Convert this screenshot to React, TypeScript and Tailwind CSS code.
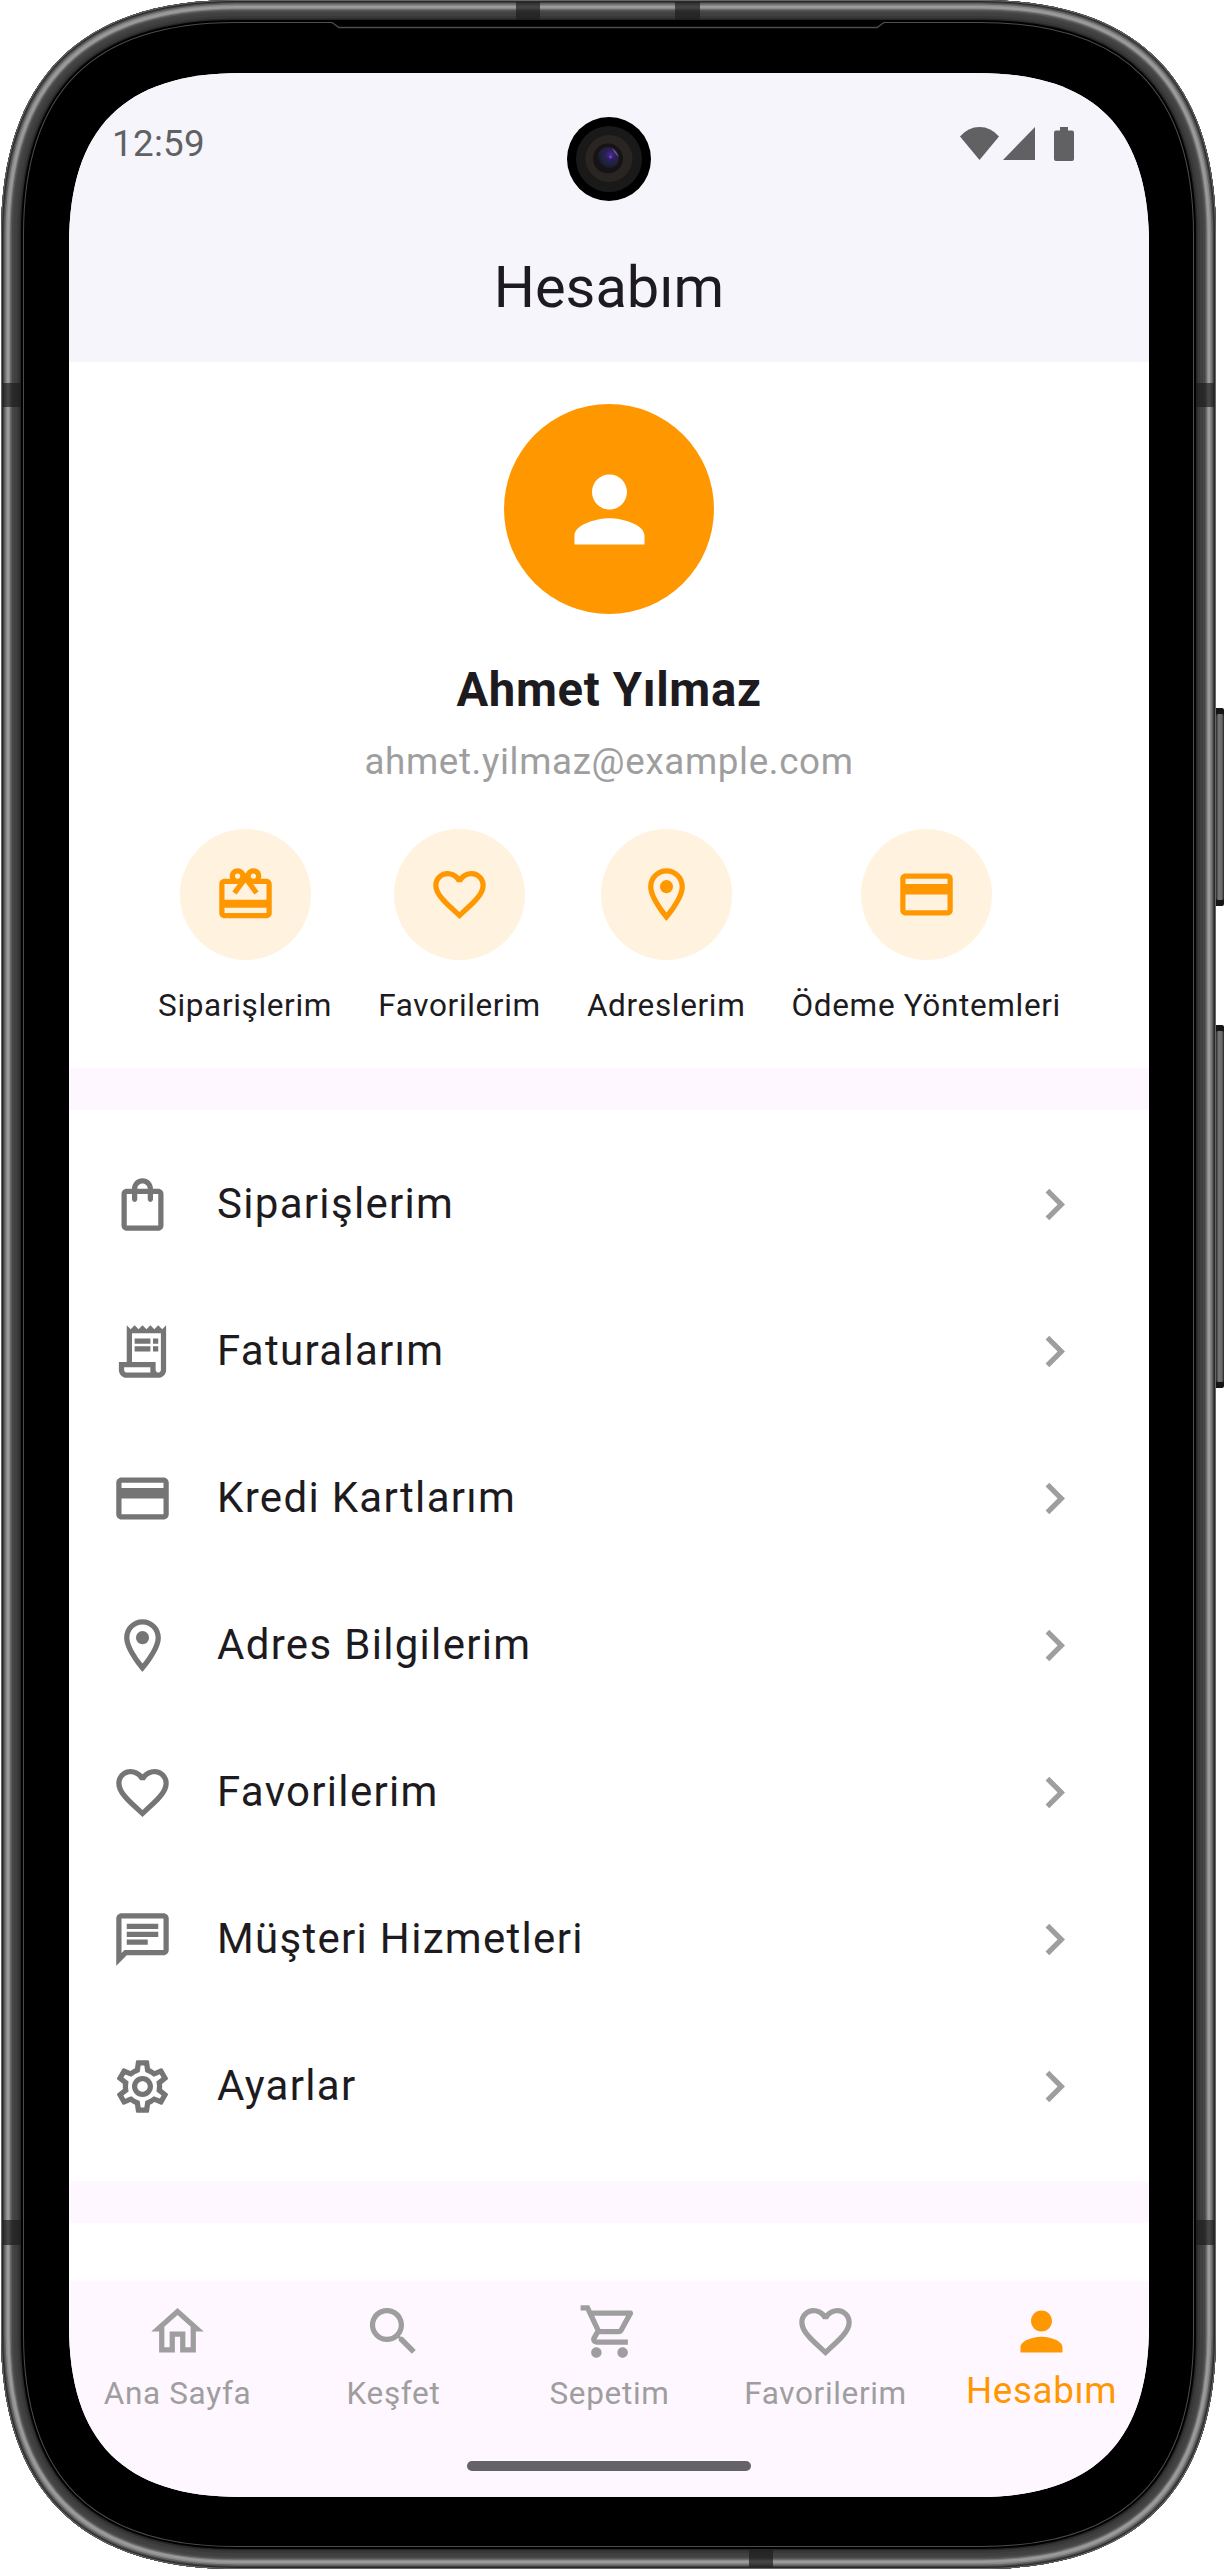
import type { IconType } from "react-icons";
import {
  MdCardGiftcard,
  MdChevronRight,
  MdFavoriteBorder,
  MdOutlineChat,
  MdOutlineCreditCard,
  MdOutlineHome,
  MdOutlineLocationOn,
  MdOutlineReceiptLong,
  MdOutlineSettings,
  MdOutlineShoppingBag,
  MdOutlineShoppingCart,
  MdPerson,
  MdSearch,
} from "react-icons/md";

type Entry = { label: string; icon: IconType };

const quickLinks: Entry[] = [
  { label: "Siparişlerim", icon: MdCardGiftcard },
  { label: "Favorilerim", icon: MdFavoriteBorder },
  { label: "Adreslerim", icon: MdOutlineLocationOn },
  { label: "Ödeme Yöntemleri", icon: MdOutlineCreditCard },
];

const menu: Entry[] = [
  { label: "Siparişlerim", icon: MdOutlineShoppingBag },
  { label: "Faturalarım", icon: MdOutlineReceiptLong },
  { label: "Kredi Kartlarım", icon: MdOutlineCreditCard },
  { label: "Adres Bilgilerim", icon: MdOutlineLocationOn },
  { label: "Favorilerim", icon: MdFavoriteBorder },
  { label: "Müşteri Hizmetleri", icon: MdOutlineChat },
  { label: "Ayarlar", icon: MdOutlineSettings },
];

const tabs: Entry[] = [
  { label: "Ana Sayfa", icon: MdOutlineHome },
  { label: "Keşfet", icon: MdSearch },
  { label: "Sepetim", icon: MdOutlineShoppingCart },
  { label: "Favorilerim", icon: MdFavoriteBorder },
  { label: "Hesabım", icon: MdPerson },
];

const BODY =
  "M1 235C1 79 80 0 236 0H981C1137 0 1216 79 1216 235V2334C1216 2490 1137 2569 981 2569H236C80 2569 1 2490 1 2334Z";

// Metal rim, from the innermost ring outwards: [depth from the edge, colour]
const rim: [number, string][] = [
  [23, "#4c4c4c"],
  [22, "#000000"],
  [20, "#262626"],
  [18.5, "#383838"],
  [16, "#404040"],
  [13, "#464646"],
  [11, "#585858"],
  [9.5, "#7c7c7c"],
  [8.5, "#9a9a9a"],
  [6, "#888888"],
  [4.5, "#606060"],
  [3, "#404040"],
  [2, "#282828"],
  [1, "#666666"],
];

function PhoneFrame() {
  return (
    <svg className="absolute inset-0" width="1224" height="2570" viewBox="0 0 1224 2570" aria-hidden="true">
      <defs>
        <clipPath id="body">
          <path d={BODY} />
        </clipPath>
        <linearGradient id="key" x1="0" x2="1" y1="0" y2="0">
          <stop offset="0" stopColor="#2a2a2a" />
          <stop offset="0.35" stopColor="#777" />
          <stop offset="0.75" stopColor="#666" />
          <stop offset="1" stopColor="#222" />
        </linearGradient>
      </defs>
      <rect x="1214" y="708" width="10" height="198" rx="2" fill="#151515" />
      <rect x="1216" y="714" width="8" height="186" rx="2" fill="url(#key)" />
      <rect x="1214" y="1025" width="10" height="363" rx="2" fill="#151515" />
      <rect x="1216" y="1031" width="8" height="351" rx="2" fill="url(#key)" />
      <g clipPath="url(#body)">
        <path d={BODY} fill="#000" />
        {rim.map(([depth, color]) => (
          <path key={depth} d={BODY} fill="none" stroke={color} strokeWidth={depth * 2} />
        ))}
        <g fill="#1c1c1c" fillOpacity="0.68">
          <rect x="516" y="2" width="24" height="18" />
          <rect x="675" y="2" width="25" height="18" />
          <rect x="749" y="2550" width="24" height="17" />
          <rect x="3" y="383" width="18" height="24" />
          <rect x="1196" y="383" width="18" height="24" />
          <rect x="3" y="2220" width="18" height="25" />
          <rect x="1196" y="2220" width="18" height="25" />
        </g>
        <rect x="333" y="21" width="550" height="5" fill="#000" />
        <path d="M332 22.5L339 27.5H877L884 22.5" fill="none" stroke="#4c4c4c" strokeWidth="1.3" />
      </g>
    </svg>
  );
}

function Camera() {
  return (
    <svg className="absolute left-[497.500px] top-[44px]" width="84" height="84" viewBox="0 0 84 84" aria-hidden="true">
      <defs>
        <radialGradient id="lens" cx="0.62" cy="0.36" r="0.65">
          <stop offset="0" stopColor="#4a2c90" />
          <stop offset="0.35" stopColor="#2c2058" />
          <stop offset="0.75" stopColor="#1c2234" />
          <stop offset="1" stopColor="#10131b" />
        </radialGradient>
      </defs>
      <circle cx="42" cy="42" r="42" fill="#000" />
      <circle cx="42" cy="42" r="33" fill="#191919" />
      <circle cx="42" cy="41.5" r="23.5" fill="#282523" />
      <circle cx="41" cy="41.5" r="15" fill="#171213" />
      <circle cx="41" cy="41" r="11" fill="url(#lens)" />
      <circle cx="43.5" cy="40" r="1.6" fill="#6a3bd8" />
      <path d="M45 31.5Q50 34 51.5 40Q48 37 45 31.5Z" fill="#8b74a8" fillOpacity="0.7" />
    </svg>
  );
}

function StatusIcons() {
  return (
    <svg width="116" height="36" viewBox="0 0 116 36" fill="#616164" aria-hidden="true">
      <path d="M0 10.5Q8 1 19.5 1T39 10.5L19.5 34Z" />
      <path d="M75 1V34H43Z" />
      <path d="M100 1H108V4.5H112Q114 4.500 114 6.500V33Q114 35 112 35H96Q94 35 94 33V6.500Q94 4.500 96 4.500H100Z" />
    </svg>
  );
}

function Header() {
  return (
    <header className="h-[289px] bg-[#f6f5fb]">
      <div className="flex h-[142px] items-center justify-between pl-[43px] pr-[73px]">
        <span className="text-[36.750px] leading-[42px] tracking-[0.300px] text-[#616164]">12:59</span>
        <StatusIcons />
      </div>
      <h1 className="flex h-[145px] items-center justify-center text-[57.750px] leading-none">Hesabım</h1>
    </header>
  );
}

function Profile() {
  return (
    <section className="flex h-[706px] flex-col items-center bg-white px-[42px] pt-[42px]">
      <div className="flex size-[210px] shrink-0 items-center justify-center rounded-full bg-[#ff9800]">
        <MdPerson className="size-[105px] text-white" />
      </div>
      <h2 className="mt-[43px] text-[47.250px] font-bold leading-[67px] tracking-[0.656px]">Ahmet Yılmaz</h2>
      <p className="mt-[11px] text-[36.750px] leading-[53px] tracking-[0.656px] text-[#9e9e9e]">
        ahmet.yilmaz@example.com
      </p>
      <div className="mt-[41px] flex w-full justify-evenly pl-px">
        {quickLinks.map(({ label, icon: Icon }) => (
          <div key={label} className="flex flex-col items-center">
            <div className="flex size-[131px] items-center justify-center rounded-full bg-[#fff2df]">
              <Icon className="size-[63px] text-[#ff9800]" />
            </div>
            <span className="mt-[23px] whitespace-nowrap text-[31.500px] leading-[45px] tracking-[0.656px]">{label}</span>
          </div>
        ))}
      </div>
    </section>
  );
}

function Menu() {
  return (
    <ul className="mt-[42px] h-[1071px] bg-white py-[21px]">
      {menu.map(({ label, icon: Icon }) => (
        <li key={label} className="flex h-[147px] items-center pl-[42px] pr-[63px]">
          <Icon className="size-[63px] shrink-0 text-[#757575]" />
          <span className="ml-[43px] flex-1 pb-[2px] text-[42px] leading-[63px] tracking-[1.312px]">{label}</span>
          <MdChevronRight className="size-[63px] shrink-0 text-[#9e9e9e]" />
        </li>
      ))}
    </ul>
  );
}

function TabBar() {
  return (
    <nav className="relative flex h-[216px] bg-[#fef7ff] shadow-[0_-3px_10px_rgba(0,0,0,0.012)]">
      {tabs.map(({ label, icon: Icon }) => {
        const active = label === "Hesabım";
        return (
          <div
            key={label}
            className={`flex flex-1 flex-col items-center pt-[19px] ${active ? "text-[#ff9800]" : "text-[#9e9e9e]"}`}
          >
            <Icon className="size-[63px]" />
            <span
              className={`whitespace-nowrap pl-px leading-[53px] ${
                active ? "mt-px text-[36.750px] tracking-[0.656px]" : "mt-[4px] text-[31.500px] tracking-[0.656px]"
              }`}
            >
              {label}
            </span>
          </div>
        );
      })}
      <div className="absolute bottom-[26px] left-[398px] h-[10px] w-[284px] rounded-full bg-[#656268]" />
    </nav>
  );
}

export default function App() {
  return (
    <div className="relative h-[2570px] w-[1224px] overflow-hidden bg-white pl-[69px] pt-[73px] font-['Roboto',sans-serif] text-[#1d1b20]">
      <PhoneFrame />
      <main className="relative flex h-[2424px] w-[1080px] flex-col bg-[#fef7ff] [clip-path:path('M0_172C0_55_55_0_172_0H908C1025_0_1080_55_1080_172V2252C1080_2369_1025_2424_908_2424H172C55_2424_0_2369_0_2252Z')]">
        <Header />
        <Profile />
        <Menu />
        <div className="mt-[42px] h-[58px] bg-white" />
        <TabBar />
        <Camera />
      </main>
    </div>
  );
}
